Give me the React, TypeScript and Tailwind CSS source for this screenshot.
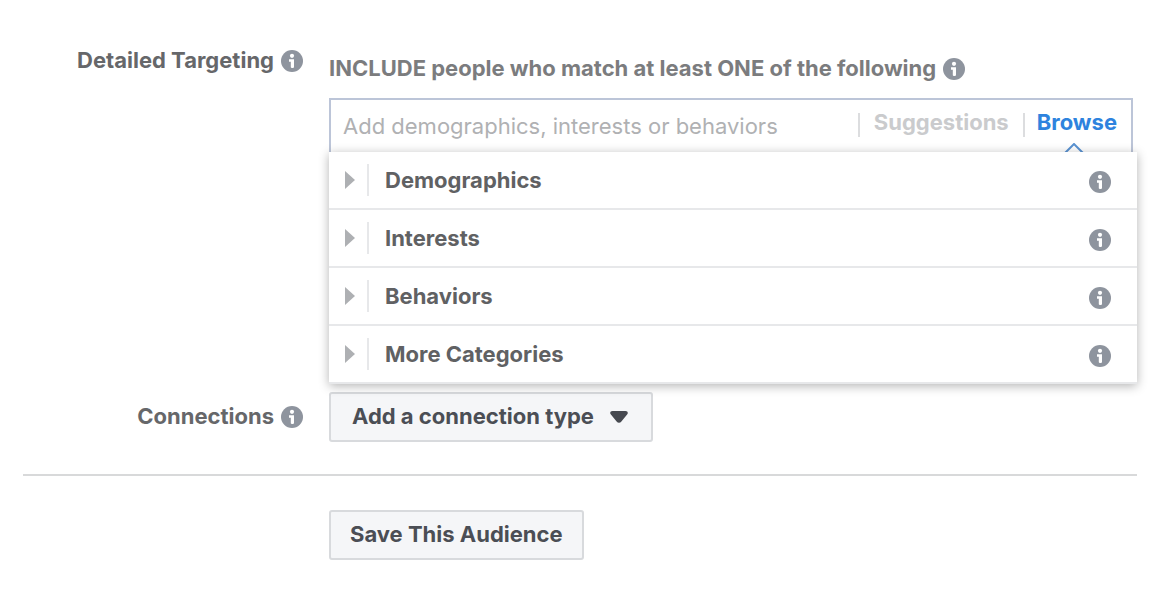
import { useState } from 'react';

const CATEGORIES = ['Demographics', 'Interests', 'Behaviors', 'More Categories'];

export default function App() {
  const [query, setQuery] = useState('');

  return (
    <main className="bg-white pt-[45px] pr-9 pb-9 pl-[23px] font-['Inter',sans-serif] text-[22px] leading-[30px] font-bold text-[#66676a]">
      <div className="grid grid-cols-[280px_1fr] gap-x-[26px] gap-y-2">
        <div className="flex h-8 items-center justify-end gap-[7px]">
          <label htmlFor="targeting" className="pb-0.5">Detailed Targeting</label>
          <InfoButton label="About detailed targeting" />
        </div>

        <div className="pt-2">
          <div className="flex h-8 items-center gap-[7px] text-[#7b7c7e]">
            <span className="pb-0.5">INCLUDE people who match at least ONE of the following</span>
            <InfoButton label="About matching" />
          </div>

          {/* Search box, open at the bottom where the list begins */}
          <div className="mt-[13px] mr-1 flex h-[54px] border-2 border-b-0 border-[#bcc5d8] pr-[14px]">
            <input
              id="targeting"
              value={query}
              onChange={(e) => setQuery(e.target.value)}
              placeholder="Add demographics, interests or behaviors"
              className="min-w-0 flex-1 pl-3 font-normal outline-none placeholder:text-[#b0b1b3]"
            />
            <div className="flex items-start pt-[7px]">
              <Divider />
              <button type="button" className="px-[14px] font-bold text-[#cacbcd]">Suggestions</button>
              <Divider />
              <button type="button" className="relative pl-3 font-bold text-[#2e83de]">
                Browse
                <svg className="absolute top-[36px] left-[37px]" width="24" height="12" viewBox="0 0 24 12" fill="none" aria-hidden="true">
                  <path d="M1.500 11.500 12 1 22.500 11.500" stroke="#5a93d2" strokeWidth="2" />
                </svg>
              </button>
            </div>
          </div>

          <ul className="relative bg-white shadow-[0_2px_10px_rgba(0,0,0,0.3)]">
            {CATEGORIES.map((name) => (
              <li key={name} className="flex h-[58px] items-center border-b-2 border-[#e7e8ea] pr-[26px]">
                <button type="button" className="flex flex-1 items-center pl-4 text-left font-bold text-[#606163]">
                  <svg width="10" height="18" viewBox="0 0 10 18" fill="#aeb0b3" aria-hidden="true">
                    <path d="M0 0 10 9 0 18z" />
                  </svg>
                  <span className="ml-3 h-8 w-0.5 bg-[#e7e8ea]" />
                  <span className="ml-4">{name}</span>
                </button>
                <span className="pt-1">
                  <InfoButton label={`About ${name}`} />
                </span>
              </li>
            ))}
          </ul>
        </div>

        <div className="flex h-[50px] items-center justify-end gap-[7px]">
          <span className="pb-0.5">Connections</span>
          <InfoButton label="About connections" />
        </div>
        <div>
          <button type="button" className="flex h-[50px] items-center gap-4 rounded-[3px] border-2 border-[#d8dadd] bg-[#f5f6f8] pr-[23px] pl-[21px] font-bold text-[#4b4e55]">
            <span className="pb-0.5">Add a connection type</span>
            <svg width="18" height="12" viewBox="0 0 18 12" fill="#464950" aria-hidden="true">
              <path d="M2.500 0h13c2.200 0 3 2 1.600 3.600l-5.700 7c-1.300 1.600-3.500 1.600-4.800 0L.9 3.600C-.5 2 .3 0 2.500 0z" />
            </svg>
          </button>
        </div>
      </div>

      <hr className="mt-8 border-t-2 border-[#d8d9da]" />

      <div className="mt-[34px] pl-[306px]">
        <button type="button" className="h-[50px] rounded-[3px] border-2 border-[#d8dadd] bg-[#f5f6f8] px-[19px] pb-0.5 font-bold text-[#4b4e55]">
          Save This Audience
        </button>
      </div>
    </main>
  );
}

function Divider() {
  return <span className="mt-[6px] h-6 w-0.5 bg-[#dcdddf]" />;
}

function InfoButton({ label }: { label: string }) {
  return (
    <button type="button" aria-label={label} className="block shrink-0">
      <svg className="block" width="22" height="22" viewBox="0 0 22 22" aria-hidden="true">
        <circle cx="11" cy="11" r="11" fill="#8e949e" />
        <circle cx="11" cy="5.800" r="2.100" fill="#fff" />
        <path d="M8 9.200h5V17c0 1.300-3.200 1.300-3.200 0v-5.200H8z" fill="#fff" />
      </svg>
    </button>
  );
}
